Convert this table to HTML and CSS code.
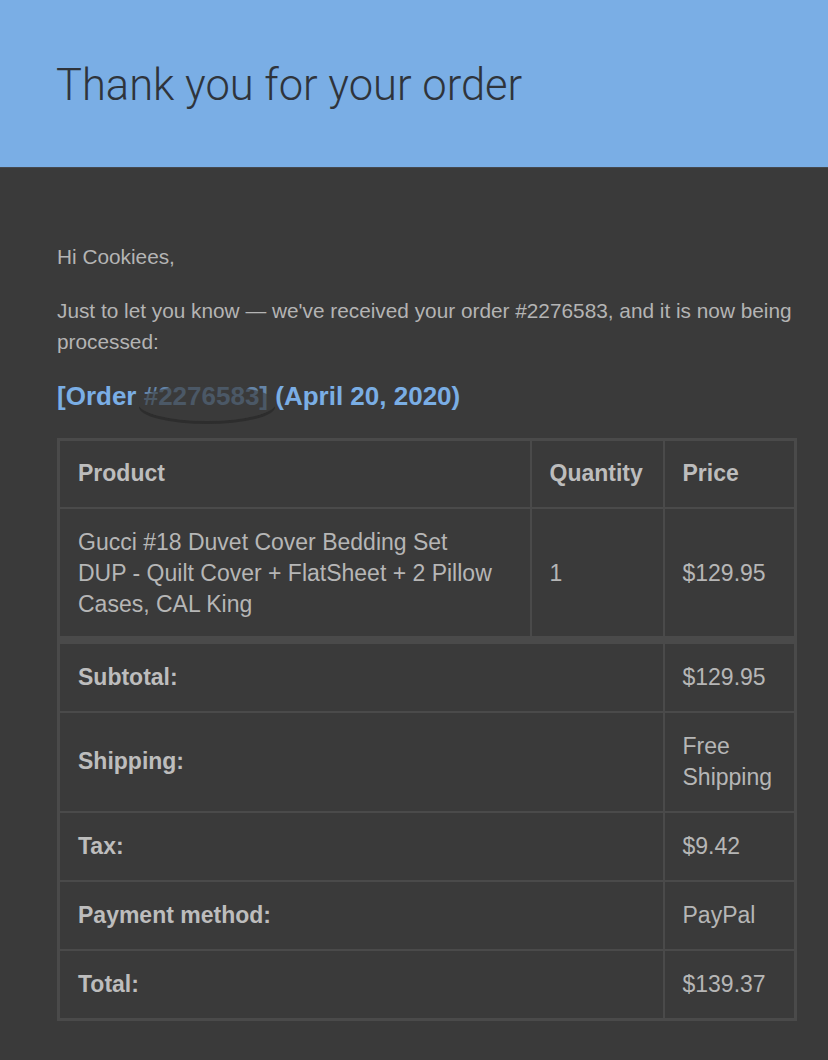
FILE: index.html
```html
<!DOCTYPE html>
<html>
<head>
<meta charset="utf-8">
<link rel="stylesheet" href="styles.css">
</head>
<body>
<header class="hero">
  <h1 class="hero-title">Thank you for your order</h1>
</header>
<main class="content">
  <p class="greet">Hi Cookiees,</p>
  <p class="intro">Just to let you know — we've received your order #2276583, and it is now being processed:</p>
  <h2 class="order-title">[Order <span class="redact">#2276583]<span class="scribble"></span></span> (April 20, 2020)</h2>
  <table class="order">
    <colgroup>
      <col class="col-prod">
      <col class="col-qty">
      <col class="col-price">
    </colgroup>
    <thead>
      <tr>
        <th>Product</th>
        <th>Quantity</th>
        <th>Price</th>
      </tr>
    </thead>
    <tbody>
      <tr class="item">
        <td class="prod">Gucci #18 Duvet Cover Bedding Set DUP - Quilt Cover + FlatSheet + 2 Pillow Cases, CAL King</td>
        <td>1</td>
        <td>$129.95</td>
      </tr>
    </tbody>
    <tfoot>
      <tr class="first r-sub">
        <th colspan="2">Subtotal:</th>
        <td>$129.95</td>
      </tr>
      <tr class="r-ship">
        <th colspan="2">Shipping:</th>
        <td>Free Shipping</td>
      </tr>
      <tr class="r-tax">
        <th colspan="2">Tax:</th>
        <td>$9.42</td>
      </tr>
      <tr class="r-pay">
        <th colspan="2">Payment method:</th>
        <td>PayPal</td>
      </tr>
      <tr class="r-total">
        <th colspan="2">Total:</th>
        <td>$139.37</td>
      </tr>
    </tfoot>
  </table>
</main>
</body>
</html>
```
FILE: styles.css
```css
html, body {
  margin: 0;
  padding: 0;
  background: #3a3a3a;
}
body {
  font-family: "Liberation Sans", Arial, sans-serif;
  color: #b4b4b4;
}
.hero {
  background: #7aaee5;
  height: 168px;
  box-sizing: border-box;
  padding: 60px 56px 0;
  border-bottom: 1px solid #45494f;
}
.hero-title {
  margin: 0;
  font-family: Roboto, "Liberation Sans", Arial, sans-serif;
  font-weight: 300;
  font-size: 43.5px;
  line-height: 52px;
  color: #2f343b;
}
.content {
  padding: 73px 32px 40px 57px;
}
.greet, .intro {
  margin: 0;
  font-size: 20.8px;
  line-height: 31px;
}
.greet {
  margin-bottom: 23px;
}
.intro {
  margin-bottom: 24px;
}
.order-title {
  margin: 0 0 27px;
  font-size: 26px;
  line-height: 30px;
  font-weight: 700;
  color: #7aaee5;
}
.redact {
  position: relative;
  color: #6585a8;
}
.scribble {
  position: absolute;
  left: -6px;
  right: -8px;
  top: 4px;
  bottom: -10px;
  border-radius: 50%;
  background: rgba(58, 58, 58, 0.6);
  box-shadow: 0 4px 0 -1px rgba(40, 40, 40, 0.7);
}
.order {
  width: 737px;
  table-layout: fixed;
  border-collapse: collapse;
  border: 3px solid #4a4a4a;
  font-size: 23px;
  color: #b6b6b6;
}
.col-prod { width: 472px; }
.col-qty { width: 133px; }
.col-price { width: 132px; }
.order th, .order td {
  border: 2px solid #4a4a4a;
  padding: 0 18px;
  text-align: left;
  vertical-align: middle;
  line-height: 31px;
}
.order .prod {
  padding-right: 36px;
}
.order th {
  font-weight: 700;
  color: #bdbdbd;
}
.order thead tr { height: 68px; }
.order .item { height: 132px; }
.order .item td { padding-top: 2px; }
.order tfoot .first th, .order tfoot .first td {
  border-top: 8px solid #4a4a4a;
}
.r-sub { height: 72px; }
.r-ship { height: 100px; }
.r-tax { height: 69px; }
.r-pay { height: 69px; }
.r-total { height: 70px; }
```
